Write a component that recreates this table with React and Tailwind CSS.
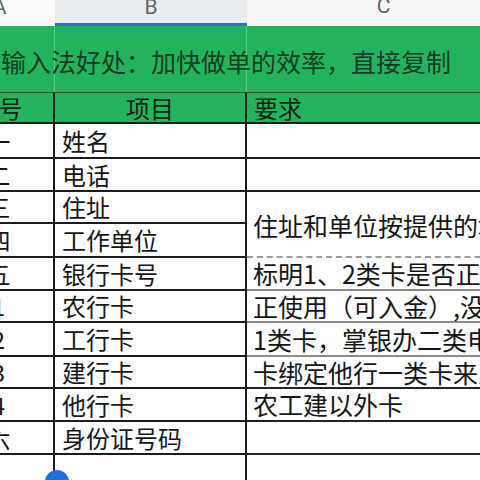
import React from "react";

const rows = [
  { a: "一", b: "姓名", h: "h-[35px]" },
  { a: "二", b: "电话", h: "h-[33px]" },
  { a: "三", b: "住址", h: "h-[32px]" },
  { a: "四", b: "工作单位", h: "h-[34px]" },
  { a: "五", b: "银行卡号", h: "h-[33px]" },
  { a: "1", b: "农行卡", h: "h-[32px]" },
  { a: "2", b: "工行卡", h: "h-[34px]" },
  { a: "3", b: "建行卡", h: "h-[32px]" },
  { a: "4", b: "他行卡", h: "h-[33px]" },
  { a: "六", b: "身份证号码", h: "h-[33px]" },
];

const cText = {
  4: { t: "标明1、2类卡是否正", line: "border-[#8a8a8a]" },
  5: { t: "正使用（可入金）,没有的写无", line: "border-[#8a8a8a]" },
  6: { t: "1类卡，掌银办二类电子账户", line: "border-[#8a8a8a]" },
  7: { t: "卡绑定他行一类卡来入金", line: "border-[#222]" },
  8: { t: "农工建以外卡", line: "border-[#222]" },
  9: { t: "", line: "border-[#222]" },
};

export default function App() {
  const cjk = "font-['Noto_Sans_CJK_SC','Noto_Sans',sans-serif]";
  return (
    <div className={`relative w-[480px] h-[480px] overflow-hidden bg-white ${cjk}`}>
      <div className="ml-[-56px] w-[576px]">
        {/* column letters */}
        <div className="grid grid-cols-[111px_192px_273px] h-[26px] font-['Roboto',sans-serif] text-[21px] leading-none text-[#5f6368]">
          <div className="bg-[#fbfbfc] flex justify-center items-start pt-[1px]">
            <span className="-mt-[4px]">A</span>
          </div>
          <div className="bg-[#e9ecf1] border-b-[3px] border-[#2a6fd8] flex justify-center items-start pt-[1px]">
            <span className="-mt-[4px]">B</span>
          </div>
          <div className="bg-[#f6f7f9] flex justify-center items-start pt-[1px]">
            <span className="-mt-[5px]">C</span>
          </div>
        </div>

        {/* green title */}
        <div className="grid grid-cols-[111px_192px_273px] h-[67px] bg-[#22b45c] border-b border-[#1e5a35]">
          <div className="border-r border-[#5fcc8c] flex items-center pl-[57px] whitespace-nowrap text-[25px] leading-none text-[#163a24] z-10">
            <span className="pt-[4px]">输入法好处：加快做单的效率，直接复制</span>
          </div>
          <div className="border-r border-[#5fcc8c]"></div>
          <div></div>
        </div>

        {/* green header */}
        <div className="grid grid-cols-[111px_192px_273px] h-[31px] bg-[#22b45c] border-b-2 border-[#1c1c1c] text-[24px] leading-none text-[#0f1f15]">
          <div className="border-r-2 border-[#1c1c1c] flex items-center justify-center">序号</div>
          <div className="border-r-2 border-[#1c1c1c] flex items-center justify-center">项目</div>
          <div className="flex items-center pl-[7px]">要求</div>
        </div>

        {/* body */}
        <div className="grid grid-cols-[111px_192px_273px] text-[24px] leading-none text-[#151515]">
          {rows.map((r, i) => (
            <React.Fragment key={i}>
              <div className={`${r.h} border-r-2 border-b-2 border-[#1c1c1c] flex items-center justify-center`}>
                {r.a}
              </div>
              <div className={`${r.h} border-r-2 border-b-2 border-[#1c1c1c] flex items-center pl-[7px]`}>
                {r.b}
              </div>
              {i < 2 && <div className={`${r.h} border-b-2 border-[#1c1c1c]`}></div>}
              {i === 2 && (
                <div className="row-span-2 border-b-2 border-dashed border-[#9a9a9a] flex items-center pl-[6px] whitespace-nowrap pt-[2px] text-[25px]">
                  住址和单位按提供的填写
                </div>
              )}
              {i >= 4 && (
                <div className={`${r.h} border-b-2 ${cText[i].line} flex items-center pl-[6px] whitespace-nowrap overflow-hidden text-[25px]`}>
                  {cText[i].t}
                </div>
              )}
            </React.Fragment>
          ))}
          <div className="h-[30px] border-r-2 border-[#1c1c1c]"></div>
          <div className="h-[30px] border-r-2 border-[#1c1c1c]"></div>
          <div className="h-[30px]"></div>
        </div>
      </div>
      <div className="absolute left-[45px] top-[470px] w-[24px] h-[24px] rounded-full bg-[#1f6fe0]"></div>
    </div>
  );
}
